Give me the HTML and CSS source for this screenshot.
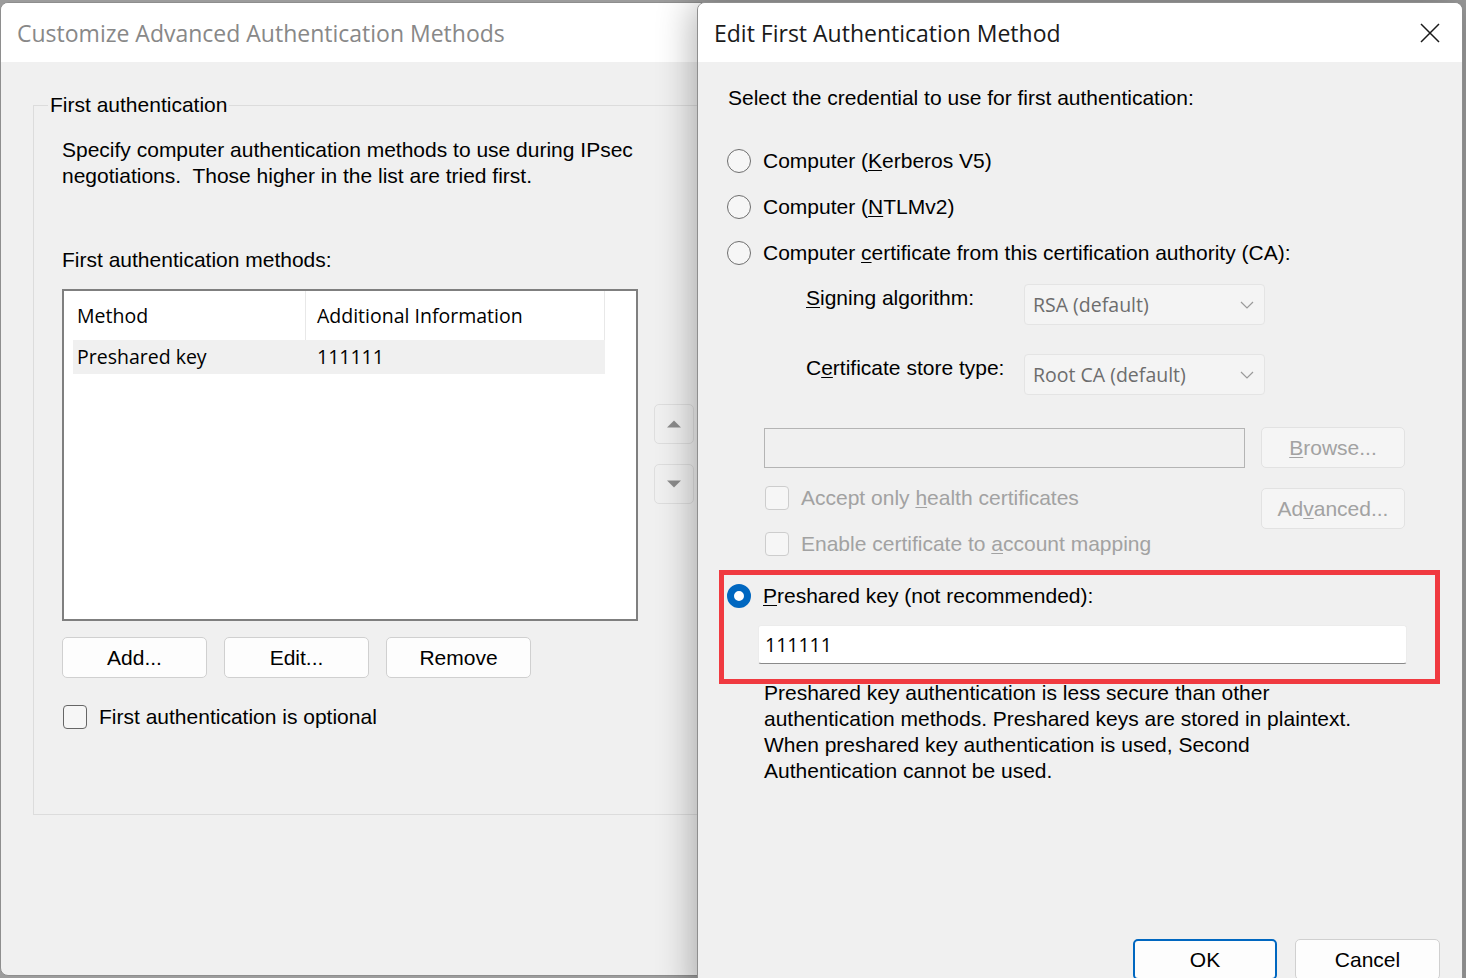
FILE: index.html
```html
<!DOCTYPE html>
<html lang="en">
<head>
    <meta charset="UTF-8">
    <title>Customize Advanced Authentication Methods</title>
    <link rel="stylesheet" href="styles.css">
</head>
<body>
    <div class="desktop">

        <!-- parent dialog (inactive) -->
        <div class="window back">
            <div class="titlebar inactive">
                <span class="title">Customize Advanced Authentication Methods</span>
            </div>
            <div class="client">
                <fieldset class="group">
                    <legend>First authentication</legend>
                    <div class="group-body">
                        <p class="hint">Specify computer authentication methods to use during IPsec<br>negotiations.&nbsp; Those higher in the list are tried first.</p>
                        <div class="field-label">First authentication methods:</div>

                        <div class="list-row">
                            <div class="listview">
                                <div class="lv-line lv-head">
                                    <span class="col-a">Method</span>
                                    <span class="col-b">Additional Information</span>
                                </div>
                                <div class="lv-line lv-item selected">
                                    <span class="col-a">Preshared key</span>
                                    <span class="col-b">111111</span>
                                </div>
                            </div>
                            <div class="order-buttons">
                                <button class="arrow-btn">
                                    <svg width="16" height="8" viewBox="0 0 16 8"><path d="M1 7.5 L8 0.5 L15 7.5 Z" fill="#8c8c8c"/></svg>
                                </button>
                                <button class="arrow-btn">
                                    <svg width="16" height="8" viewBox="0 0 16 8"><path d="M1 0.5 L8 7.5 L15 0.5 Z" fill="#8c8c8c"/></svg>
                                </button>
                            </div>
                        </div>

                        <div class="btn-row">
                            <button class="btn">Add...</button>
                            <button class="btn">Edit...</button>
                            <button class="btn">Remove</button>
                        </div>

                        <label class="check">
                            <span class="box"></span>
                            <span>First authentication is optional</span>
                        </label>
                    </div>
                </fieldset>
            </div>
        </div>

        <!-- active dialog -->
        <div class="window front">
            <div class="titlebar">
                <span class="title">Edit First Authentication Method</span>
                <span class="close">
                    <svg width="20" height="20" viewBox="0 0 20 20"><path d="M1 1 L19 19 M19 1 L1 19" stroke="#1a1a1a" stroke-width="1.5" fill="none"/></svg>
                </span>
            </div>
            <div class="client">
                <p class="prompt">Select the credential to use for first authentication:</p>

                <div class="radios">
                    <label class="radio-row"><span class="radio"></span><span>Computer (<u>K</u>erberos V5)</span></label>
                    <label class="radio-row"><span class="radio"></span><span>Computer (<u>N</u>TLMv2)</span></label>
                    <label class="radio-row"><span class="radio"></span><span>Computer <u>c</u>ertificate from this certification authority (CA):</span></label>
                </div>

                <div class="cert-grid">
                    <span class="grid-label"><u>S</u>igning algorithm:</span>
                    <div class="combo">RSA (default)
                        <svg width="14" height="8" viewBox="0 0 14 8"><path d="M1 1 L7 7 L13 1" stroke="#9a9a9a" stroke-width="1.2" fill="none"/></svg>
                    </div>
                    <span class="grid-label">C<u>e</u>rtificate store type:</span>
                    <div class="combo">Root CA (default)
                        <svg width="14" height="8" viewBox="0 0 14 8"><path d="M1 1 L7 7 L13 1" stroke="#9a9a9a" stroke-width="1.2" fill="none"/></svg>
                    </div>
                </div>

                <div class="path-row">
                    <div class="path-input"></div>
                    <button class="btn disabled"><u>B</u>rowse...</button>
                </div>

                <div class="cert-options">
                    <div class="checks">
                        <label class="check disabled"><span class="box"></span><span>Accept only <u>h</u>ealth certificates</span></label>
                        <label class="check disabled"><span class="box"></span><span>Enable certificate to <u>a</u>ccount mapping</span></label>
                    </div>
                    <button class="btn disabled adv">Ad<u>v</u>anced...</button>
                </div>

                <div class="highlight">
                    <label class="radio-row psk"><span class="radio on"></span><span><u>P</u>reshared key (not recommended):</span></label>
                    <div class="key-input">111111</div>
                </div>

                <p class="note">Preshared key authentication is less secure than other<br>authentication methods. Preshared keys are stored in plaintext.<br>When preshared key authentication is used, Second<br>Authentication cannot be used.</p>

                <div class="dialog-buttons">
                    <button class="btn default">OK</button>
                    <button class="btn">Cancel</button>
                </div>
            </div>
        </div>

    </div>
</body>
</html>
```

FILE: styles.css
```css
* {
    margin: 0;
    padding: 0;
    box-sizing: border-box;
}

body {
    font-family: "Liberation Sans", Arial, sans-serif;
    font-size: 21px;
    line-height: 26px;
    color: #000;
    background: #9c9c9c;
}

u {
    text-decoration-thickness: 1px;
    text-underline-offset: 2px;
}

button {
    font: inherit;
    color: inherit;
}

/* desktop with the two dialogs */
.desktop {
    position: relative;
    width: 1466px;
    height: 978px;
    overflow: hidden;
}

.window {
    position: absolute;
    background: #f0f0f0;
    border: 1px solid #8e8e8e;
    border-radius: 8px;
    overflow: hidden;
}

.window.back {
    left: 0;
    top: 2px;
    width: 780px;
    height: 974px;
}

.window.front {
    left: 697px;
    top: 2px;
    width: 766px;
    height: 1000px;
    box-shadow: -4px 0 36px rgba(0, 0, 0, 0.3);
}

/* title bars */
.titlebar {
    height: 59px;
    background: #fff;
    display: flex;
    align-items: center;
    justify-content: space-between;
    padding-left: 16px;
    font-family: "Open Sans", "Liberation Sans", sans-serif;
    font-size: 23px;
    color: #1a1a1a;
}

.titlebar.inactive {
    color: #888;
}

.close {
    display: flex;
    margin-right: 22px;
}

/* group box on the parent dialog */
.group {
    margin: 30px 0 0 32px;
    width: 740px;
    height: 723px;
    border: 1px solid #dcdcdc;
    padding: 0;
}

.group legend {
    margin-left: 14px;
    padding: 0 2px;
}

.group-body {
    padding: 19px 0 0 28px;
}

.field-label {
    margin-top: 58px;
}

.list-row {
    display: flex;
    gap: 16px;
    margin-top: 16px;
}

.listview {
    width: 576px;
    height: 332px;
    border: 2px solid #7f7f7f;
    background: #fff;
    padding-left: 9px;
    font-family: "Open Sans", "Liberation Sans", sans-serif;
    font-size: 19.5px;
}

.lv-line {
    display: flex;
    align-items: center;
    width: 532px;
}

.lv-head {
    height: 49px;
    border-right: 1px solid #e8e8e8;
}

.lv-item {
    height: 34px;
}

.lv-item.selected {
    background: #f0f0f0;
}

.col-a {
    width: 232px;
    padding-left: 4px;
}

.col-b {
    padding-left: 12px;
}

.lv-head .col-b {
    align-self: stretch;
    display: flex;
    align-items: center;
    border-left: 1px solid #e8e8e8;
    padding-left: 11px;
}

.order-buttons {
    display: flex;
    flex-direction: column;
    gap: 20px;
    padding-top: 115px;
}

.arrow-btn {
    width: 40px;
    height: 40px;
    border: 1px solid #dedede;
    border-radius: 5px;
    background: #f0f0f0;
    display: flex;
    align-items: center;
    justify-content: center;
}

/* push buttons */
.btn {
    width: 145px;
    height: 41px;
    border: 1px solid #d0d0d0;
    border-radius: 5px;
    background: #fdfdfd;
    line-height: 26px;
}

.btn.disabled {
    width: 144px;
    background: #f5f5f5;
    border-color: #e2e2e2;
    color: #a2a2a2;
}

.btn.default {
    width: 144px;
    border: 2px solid #0067c0;
}

.btn-row {
    display: flex;
    gap: 17px;
    margin-top: 16px;
}

/* check boxes and radio buttons */
.check {
    display: flex;
    align-items: center;
    gap: 12px;
    height: 26px;
}

.check .box {
    width: 24px;
    height: 24px;
    border: 1.5px solid #666;
    border-radius: 4px;
    background: #f6f6f6;
}

.check.disabled {
    color: #a2a2a2;
}

.check.disabled .box {
    border-color: #cdcdcd;
}

.group-body .check {
    margin: 26px 0 0 1px;
}

.radio-row {
    display: flex;
    align-items: center;
    gap: 12px;
}

.radio {
    width: 24px;
    height: 24px;
    border: 1.5px solid #6e6e6e;
    border-radius: 50%;
    background: #f6f6f6;
}

.radio.on {
    border: 7px solid #0067c0;
    background: #fff;
}

/* active dialog content */
.front .client {
    padding-left: 30px;
}

.prompt {
    margin-top: 23px;
}

.radios {
    margin-top: 27px;
}

.radios .radio-row {
    height: 46px;
    margin-left: -1px;
}

.cert-grid {
    display: grid;
    grid-template-columns: 218px 241px;
    row-gap: 29px;
    margin-top: 8px;
    padding-left: 78px;
}

.grid-label {
    padding-top: 1px;
}

.combo {
    height: 41px;
    border: 1px solid #e4e4e4;
    border-radius: 4px;
    background: #f4f4f4;
    display: flex;
    align-items: center;
    justify-content: space-between;
    padding: 0 10px 0 8px;
    font-family: "Open Sans", "Liberation Sans", sans-serif;
    font-size: 19.5px;
    color: #6d6d6d;
}

.path-row {
    display: flex;
    gap: 16px;
    margin-top: 32px;
    padding-left: 36px;
}

.path-input {
    width: 481px;
    height: 40px;
    margin-top: 1px;
    border: 1px solid #b4b4b4;
    background: #f0f0f0;
}

.cert-options {
    display: flex;
    justify-content: space-between;
    width: 677px;
    padding-left: 37px;
}

.checks {
    display: flex;
    flex-direction: column;
    gap: 20px;
    margin-top: 17px;
}

.adv {
    margin-top: 20px;
}

.highlight {
    width: 721px;
    margin: 13px 0 0 -9px;
    border: 5px solid #f03a40;
    padding: 8px 0 15px 3px;
}

.key-input {
    width: 649px;
    height: 39px;
    margin: 16px 0 0 31px;
    background: #fff;
    border: 1px solid #ececec;
    border-bottom-color: #8a8a8a;
    border-radius: 3px;
    padding-left: 6px;
    display: flex;
    align-items: center;
    font-family: "Open Sans", "Liberation Sans", sans-serif;
    font-size: 19.5px;
}

.note {
    margin-top: -4px;
    padding-left: 36px;
}

.dialog-buttons {
    display: flex;
    justify-content: flex-end;
    gap: 18px;
    margin-top: 155px;
    padding-right: 22px;
}
```
